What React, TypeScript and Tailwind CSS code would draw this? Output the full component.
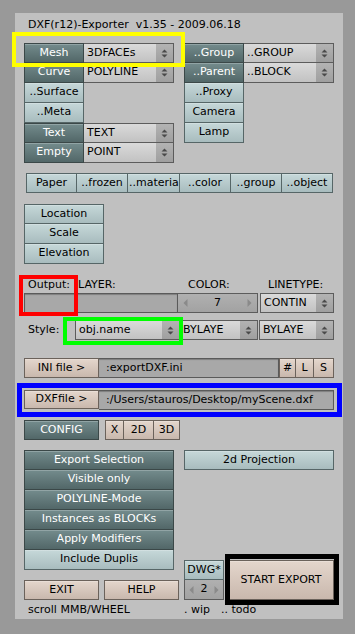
import React from "react";

const V: Record<string, string> = {
  dark: "bg-gradient-to-b from-[#748c8d] to-[#526768] text-white border-[#3b4848]",
  light: "bg-gradient-to-b from-[#c6d8d9] to-[#a8bcbe] text-black border-[#566667]",
  tan: "bg-gradient-to-b from-[#e4d6cc] to-[#c9b8ad] text-black border-[#6b625b]",
};

function Btn({ w, v, c = "", h = "h-[20px]", children }: { w: string; v: string; c?: string; h?: string; children?: React.ReactNode }) {
  return (
    <div className={`${w} ${h} ${V[v]} border flex items-center justify-center whitespace-nowrap overflow-hidden shadow-[inset_0_1px_0_rgba(255,255,255,0.22)] ${c}`}>
      {children}
    </div>
  );
}

function UpDown() {
  return (
    <svg width="7" height="9" viewBox="0 0 7 9">
      <path d="M0.5 3.5 L3.5 0.5 L6.5 3.5Z M0.5 5.5 L3.5 8.5 L6.5 5.5Z" fill="#4a4a4a" />
    </svg>
  );
}

function DD({ w, label, c = "" }: { w: string; label: string; c?: string }) {
  return (
    <div className={`${w} h-[20px] border border-[#5c5c5c] flex bg-gradient-to-b from-[#dadada] to-[#c2c2c2] ${c}`}>
      <div className="flex-1 pl-[3px] flex items-center overflow-hidden whitespace-nowrap">{label}</div>
      <div className="w-[17px] bg-gradient-to-b from-[#b3b3b3] to-[#9f9f9f] flex items-center justify-center">
        <UpDown />
      </div>
    </div>
  );
}

function Num({ w, val, c = "", px = "px-[5px]" }: { w: string; val: string; c?: string; px?: string }) {
  return (
    <div className={`${w} h-[20px] border border-[#5c5c5c] bg-gradient-to-b from-[#b0b0b0] to-[#a2a2a2] flex items-center justify-between ${px} ${c}`}>
      <svg width="5" height="8" viewBox="0 0 5 8">
        <path d="M4.5 0 L0.5 4 L4.5 8Z" fill="#8a8a8a" />
      </svg>
      <span>{val}</span>
      <svg width="5" height="8" viewBox="0 0 5 8">
        <path d="M0.5 0 L4.5 4 L0.5 8Z" fill="#8a8a8a" />
      </svg>
    </div>
  );
}

function Field({ w, text = "", c = "" }: { w: string; text?: string; c?: string }) {
  return (
    <div className={`${w} h-[20px] border border-[#5a5a5a] bg-[#a8a8a8] shadow-[inset_0_1px_1px_rgba(0,0,0,0.25)] flex items-center pl-[7px] whitespace-nowrap overflow-hidden ${c}`}>
      {text}
    </div>
  );
}

export default function App() {
  return (
    <div className="relative w-[355px] h-[634px] bg-[#999999] pt-[13px] pl-[15px] overflow-hidden font-['DejaVu_Sans',sans-serif] text-[11px] text-black">
      <div className="w-[328px] h-[606px] bg-[#c0c0c0] pl-[9px] flex flex-col">
        {/* title */}
        <div className="mt-[5px] h-[14px] leading-[14px] pl-[4px] whitespace-pre text-[11px]">DXF(r12)-Exporter  v1.35 - 2009.06.18</div>

        {/* block 1 */}
        <div className="mt-[11px] flex gap-[10px]">
          <div className="w-[150px] flex flex-col">
            <div className="flex">
              <Btn w="w-[60px]" v="dark">Mesh</Btn>
              <DD w="w-[90px]" label="3DFACEs" c="border-l-0" />
            </div>
            <div className="flex">
              <Btn w="w-[60px]" v="dark" c="border-t-0">Curve</Btn>
              <DD w="w-[90px]" label="POLYLINE" c="border-l-0 border-t-0" />
            </div>
            <Btn w="w-[60px]" v="light" c="border-t-0">..Surface</Btn>
            <Btn w="w-[60px]" v="light" c="border-t-0">..Meta</Btn>
            <div className="flex">
              <Btn w="w-[60px]" v="dark">Text</Btn>
              <DD w="w-[90px]" label="TEXT" c="border-l-0" />
            </div>
            <div className="flex">
              <Btn w="w-[60px]" v="dark" c="border-t-0">Empty</Btn>
              <DD w="w-[90px]" label="POINT" c="border-l-0 border-t-0" />
            </div>
          </div>
          <div className="w-[150px] flex flex-col">
            <div className="flex">
              <Btn w="w-[60px]" v="dark">..Group</Btn>
              <DD w="w-[90px]" label="..GROUP" c="border-l-0" />
            </div>
            <div className="flex">
              <Btn w="w-[60px]" v="dark" c="border-t-0">..Parent</Btn>
              <DD w="w-[90px]" label="..BLOCK" c="border-l-0 border-t-0" />
            </div>
            <Btn w="w-[60px]" v="light" c="border-t-0">..Proxy</Btn>
            <Btn w="w-[60px]" v="light" c="border-t-0">Camera</Btn>
            <Btn w="w-[60px]" v="light" c="border-t-0">Lamp</Btn>
          </div>
        </div>

        {/* paper row */}
        <div className="mt-[10px] ml-[2px] flex">
          <Btn w="w-[51px]" v="light">Paper</Btn>
          <Btn w="w-[51px]" v="light" c="border-l-0">..frozen</Btn>
          <Btn w="w-[52px]" v="light" c="border-l-0 justify-start pl-[1px]">..materia</Btn>
          <Btn w="w-[51px]" v="light" c="border-l-0">..color</Btn>
          <Btn w="w-[51px]" v="light" c="border-l-0">..group</Btn>
          <Btn w="w-[51px]" v="light" c="border-l-0">..object</Btn>
        </div>

        {/* location */}
        <div className="mt-[11px] w-[80px] flex flex-col">
          <Btn w="w-[80px]" v="light">Location</Btn>
          <Btn w="w-[80px]" v="light" c="border-t-0">Scale</Btn>
          <Btn w="w-[80px]" v="light" c="border-t-0">Elevation</Btn>
        </div>

        {/* labels */}
        <div className="mt-[15px] h-[12px] leading-[12px] flex pl-[4px] whitespace-nowrap">
          <span className="w-[50px]">Output:</span>
          <span className="w-[110px]">LAYER:</span>
          <span className="w-[80px]">COLOR:</span>
          <span>LINETYPE:</span>
        </div>

        {/* output row */}
        <div className="mt-[2px] flex">
          <Field w="w-[154px]" />
          <Num w="w-[80px]" val="7" c="border-l-0" />
          <DD w="w-[74px]" label="CONTIN" c="ml-[2px]" />
        </div>

        {/* style row */}
        <div className="mt-[7px] flex items-center">
          <span className="w-[51px] pl-[4px]">Style:</span>
          <DD w="w-[105px]" label="obj.name" />
          <DD w="w-[78px]" label="BYLAYE" c="border-l-0" />
          <DD w="w-[75px]" label="BYLAYE" c="ml-[1px]" />
        </div>

        {/* ini row */}
        <div className="mt-[18px] flex">
          <Btn w="w-[75px]" v="tan">INI file &gt;</Btn>
          <Field w="w-[180px]" text=":exportDXF.ini" c="border-l-0" />
          <Btn w="w-[17px]" v="tan">#</Btn>
          <Btn w="w-[18px]" v="tan" c="border-l-0">L</Btn>
          <Btn w="w-[20px]" v="tan" c="border-l-0">S</Btn>
        </div>

        {/* dxf row */}
        <div className="mt-[12px] flex">
          <Btn w="w-[75px]" v="tan" h="h-[19px]">DXFfile &gt;</Btn>
          <Field w="w-[235px]" text=":/Users/stauros/Desktop/myScene.dxf" c="border-l-0 h-[19px]" />
        </div>

        {/* config row */}
        <div className="mt-[10px] flex">
          <Btn w="w-[75px]" v="dark">CONFIG</Btn>
          <Btn w="w-[19px]" v="tan" c="ml-[6px]">X</Btn>
          <Btn w="w-[30px]" v="tan" c="border-l-0">2D</Btn>
          <Btn w="w-[26px]" v="tan" c="border-l-0">3D</Btn>
        </div>

        {/* bottom section */}
        <div className="mt-[10px] flex">
          <div className="w-[160px] flex flex-col">
            <Btn w="w-[150px]" v="dark">Export Selection</Btn>
            <Btn w="w-[150px]" v="dark" c="border-t-0">Visible only</Btn>
            <Btn w="w-[150px]" v="dark" c="border-t-0">POLYLINE-Mode</Btn>
            <Btn w="w-[150px]" v="dark" c="border-t-0">Instances as BLOCKs</Btn>
            <Btn w="w-[150px]" v="dark" c="border-t-0">Apply Modifiers</Btn>
            <Btn w="w-[150px]" v="light" c="border-t-0">Include Duplis</Btn>
            <div className="mt-[10px] flex">
              <Btn w="w-[75px]" v="tan">EXIT</Btn>
              <Btn w="w-[75px]" v="tan" c="ml-[5px]">HELP</Btn>
            </div>
          </div>
          <div className="w-[150px] flex flex-col">
            <Btn w="w-[150px]" v="light">2d Projection</Btn>
            <div className="mt-[90px] flex">
              <div className="w-[40px] flex flex-col">
                <Btn w="w-[40px]" v="light">DWG*</Btn>
                <Num w="w-[40px]" val="2" c="border-t-0" px="px-[4px]" />
              </div>
              <Btn w="w-[106px]" v="tan" h="h-[40px]" c="ml-[4px]">START EXPORT</Btn>
            </div>
          </div>
        </div>

        {/* footer text */}
        <div className="mt-[4px] h-[12px] leading-[12px] flex whitespace-nowrap">
          <span className="w-[160px] pl-[4px]">scroll MMB/WHEEL</span>
          <span className="w-[37px]">. wip</span>
          <span>.. todo</span>
        </div>
      </div>

      {/* annotation frames */}
      <div className="absolute left-[12px] top-[32px] w-[173px] h-[35px] border-4 border-[#ffff00]" />
      <div className="absolute left-[19px] top-[275px] w-[59px] h-[41px] border-4 border-[#ff0000]" />
      <div className="absolute left-[63px] top-[317px] w-[120px] h-[28px] border-4 border-[#00ff00]" />
      <div className="absolute left-[17px] top-[383px] w-[325px] h-[34px] border-[5px] border-[#0000ff]" />
      <div className="absolute left-[225px] top-[554px] w-[114px] h-[51px] border-[5px] border-black" />
    </div>
  );
}
